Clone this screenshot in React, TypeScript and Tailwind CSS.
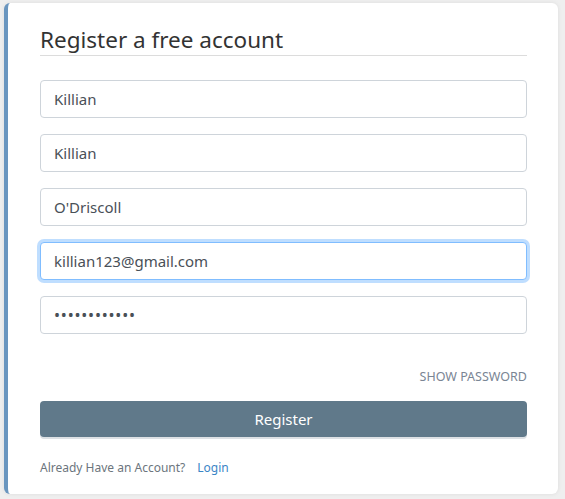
import React, { useState } from "react";

const fields = [
  { value: "Killian", type: "text" },
  { value: "Killian", type: "text" },
  { value: "O'Driscoll", type: "text" },
  { value: "killian123@gmail.com", type: "email", focused: true },
  { value: "password1234", type: "password" },
];

const Field = ({ value, type, focused }: { value: string; type: string; focused?: boolean }) => {
  const [val, setVal] = useState(value);
  return (
    <input
      type={type}
      value={val}
      onChange={(e) => setVal(e.target.value)}
      className={
        "block w-full h-[38px] rounded-[4px] border bg-white px-[13px] text-[#495057] outline-none " +
        (type === "password" ? "text-[16px] tracking-[0.8px] " : "text-[15px] ") +
        (focused
          ? "border-[#80bdff] shadow-[0_0_0_3px_rgba(0,123,255,0.25)]"
          : "border-[#ced4da]")
      }
    />
  );
};

export default function App() {
  return (
    <div
      className="min-h-screen bg-[#efefef] pt-[3px] pl-[4px]"
      style={{ fontFamily: '"Noto Sans", "Open Sans", sans-serif' }}
    >
      <div className="w-[554px] h-[491px] bg-white rounded-md border-l-4 border-[#6a96bf] shadow-[0_0_4px_rgba(0,0,0,0.08)] pl-[32px] pr-[31px] pt-[22px]">
        <h1 className="text-[22.5px] leading-[29px] text-[#333] pb-[1px] border-b border-[#dcdcdc]">
          Register a free account
        </h1>
        <form className="mt-[24px] flex flex-col gap-4" onSubmit={(e) => e.preventDefault()}>
          {fields.map((f, i) => (
            <Field key={i} {...f} />
          ))}
        </form>
        <div className="mt-[35px] flex justify-end">
          <button className="text-[12.5px] leading-[16px] uppercase text-[#7a8594]">Show Password</button>
        </div>
        <button className="mt-[16px] block w-full h-[36px] rounded-[4px] bg-[#60798a] text-white text-[15px] shadow-[0_2px_0_#dde1e5]">
          Register
        </button>
        <div className="mt-[23px] flex gap-3 text-[12px] leading-[16px]">
          <span className="text-[#6c757d]">Already Have an Account?</span>
          <a href="#" className="text-[#3a85c6]">Login</a>
        </div>
      </div>
    </div>
  );
}
